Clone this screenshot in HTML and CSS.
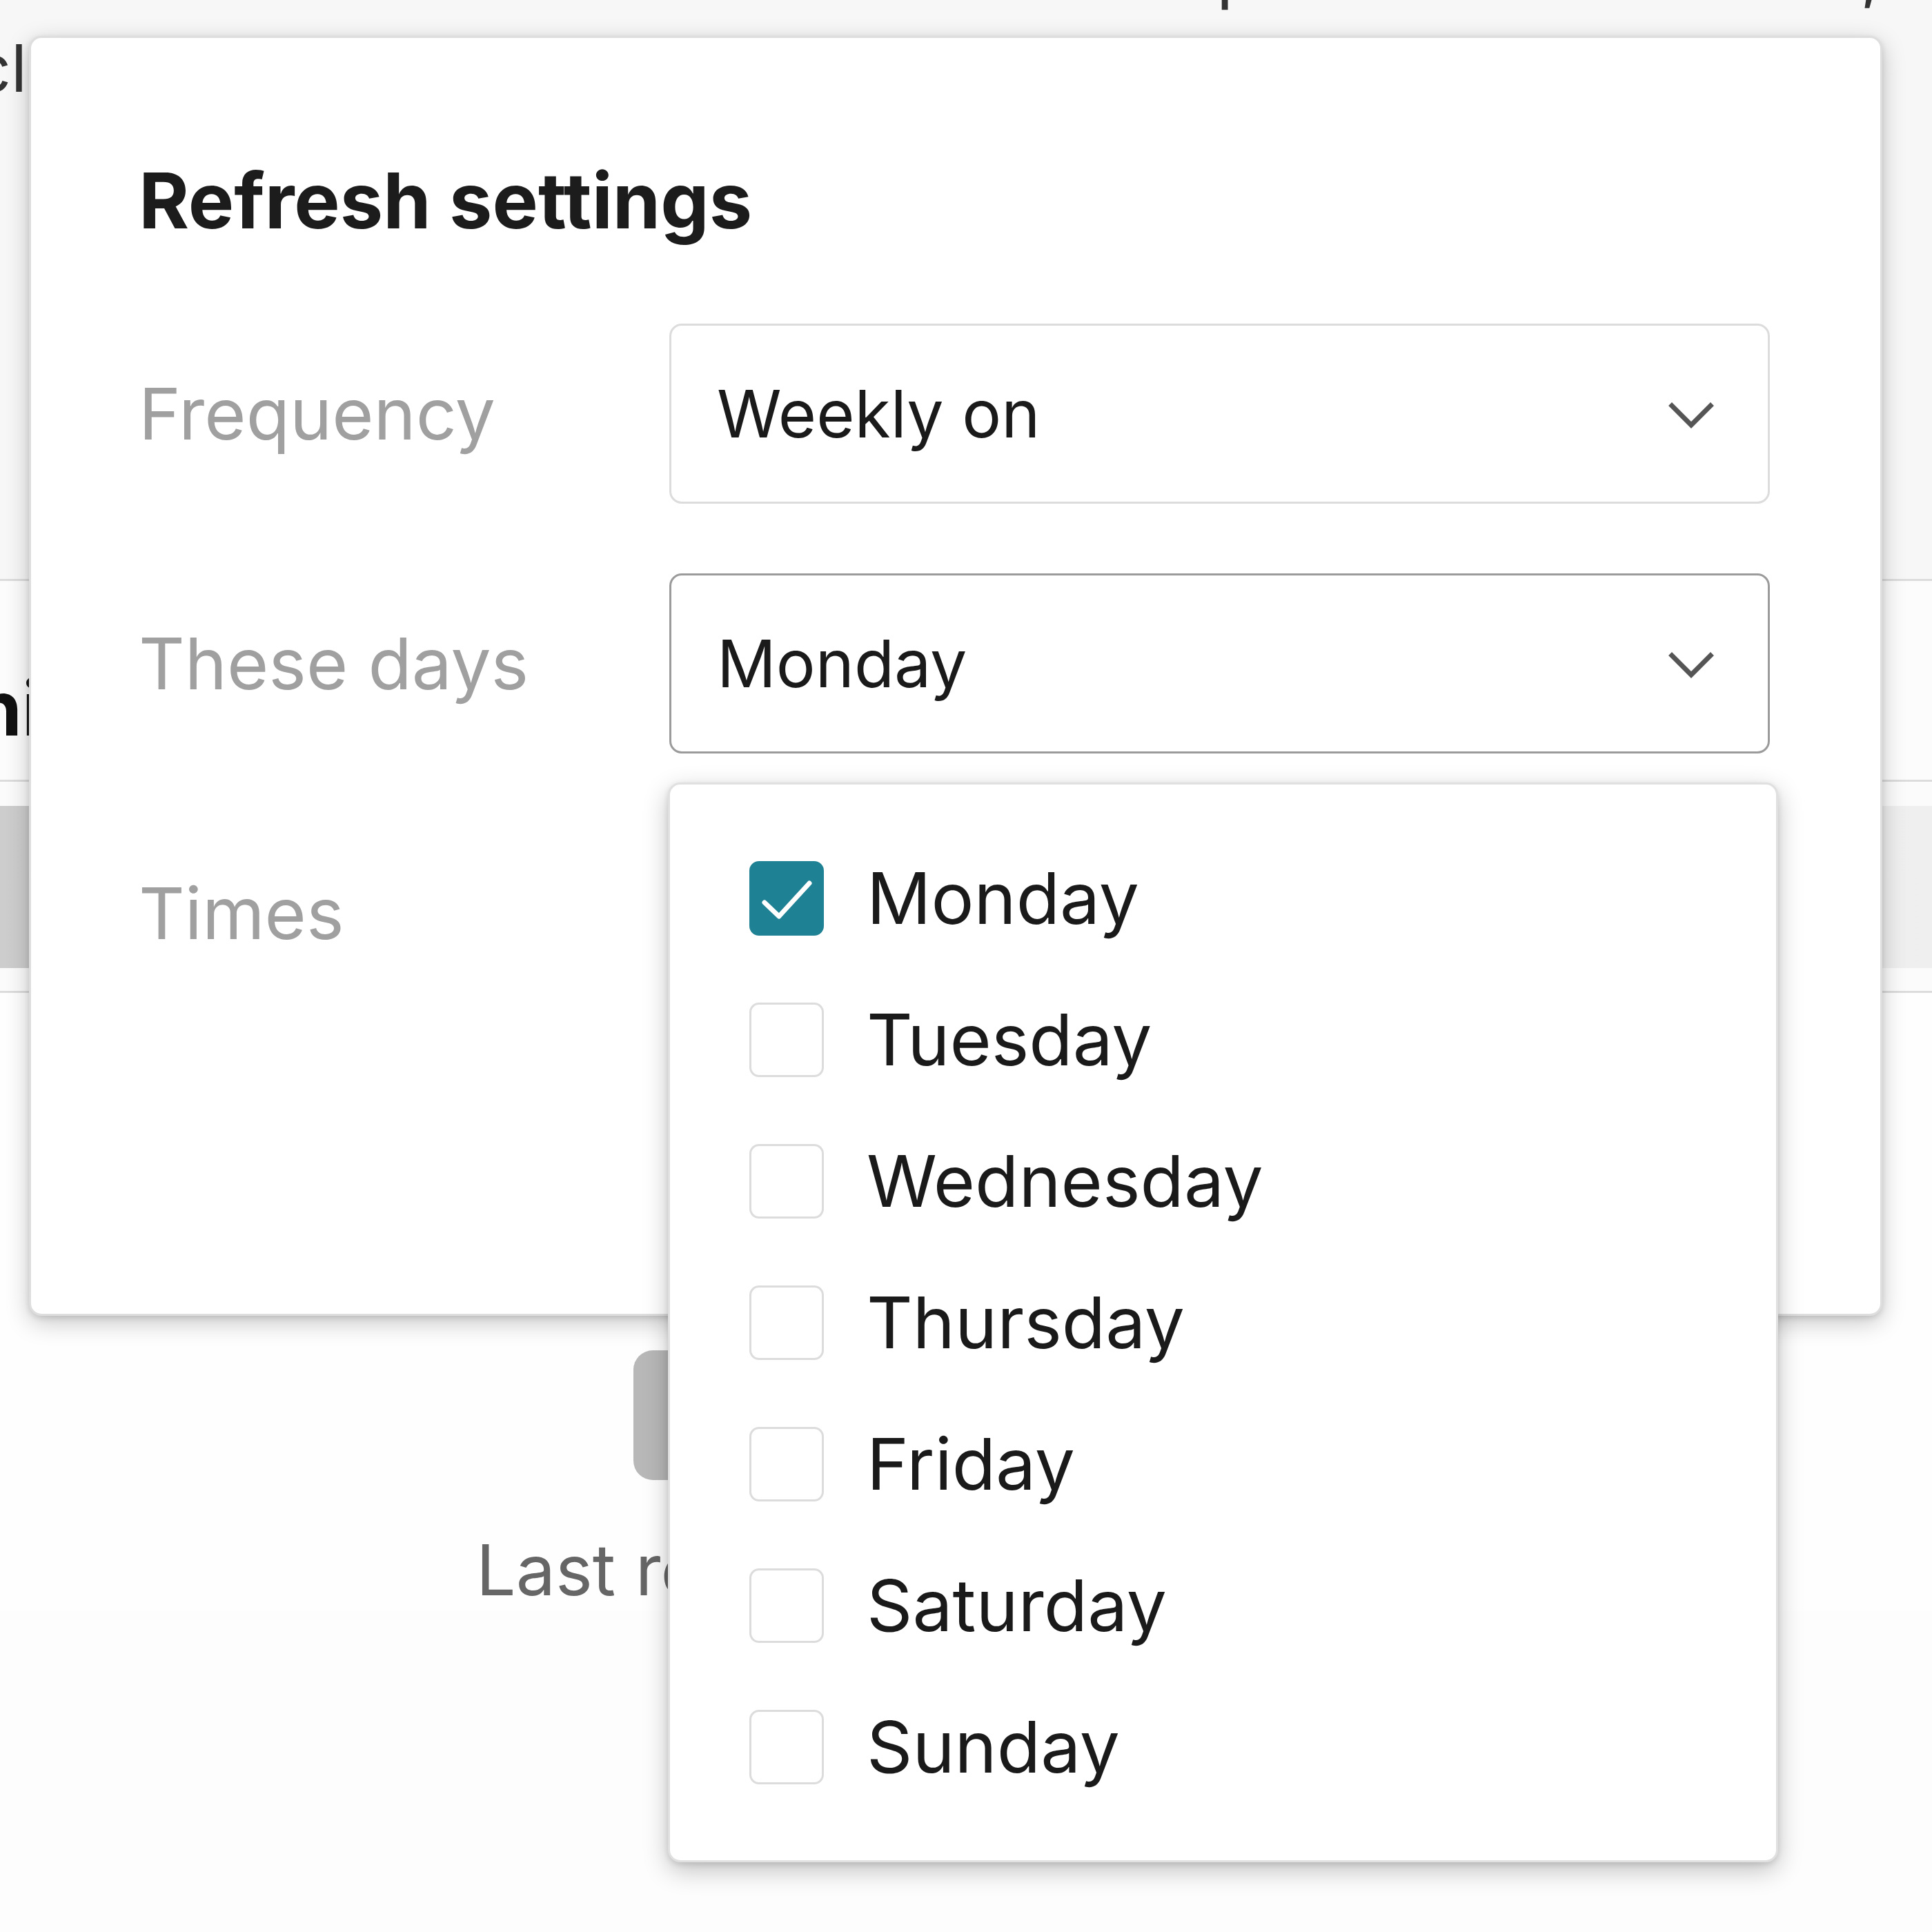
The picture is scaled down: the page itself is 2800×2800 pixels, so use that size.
FILE: index.html
```html
<!DOCTYPE html>
<html lang="en">
<head>
<meta charset="utf-8">
<title>Refresh settings</title>
<link rel="stylesheet" href="styles.css">
</head>
<body>
<div class="page">
  <div class="page-head">
    <div class="topline"><div class="topline-text"><span class="tl-p">p</span><span class="tl-c">,</span></div></div>
    <div class="head-title">Include</div>
  </div>
  <div class="rule"></div>
  <div class="row-name"><span class="row-name-text">Uni</span></div>
  <div class="rule"></div>
  <div class="row-sel"><div class="row-bar"></div></div>
  <div class="rule"></div>
  <div class="page-foot">
    <div class="refresh-btn"></div>
    <div class="last-refreshed">Last refreshed 2 hours ago</div>
  </div>
</div>

<div class="dialog">
  <h1 class="dialog-title">Refresh settings</h1>
  <div class="form">
    <div class="label">Frequency</div>
    <div class="select">
      <span class="select-value">Weekly on</span>
      <svg class="chev" viewBox="0 0 72 42"><path d="M8 7 L36 35 L64 7"/></svg>
    </div>
    <div class="label">These days</div>
    <div class="select is-open">
      <span class="select-value">Monday</span>
      <svg class="chev" viewBox="0 0 72 42"><path d="M8 7 L36 35 L64 7"/></svg>
    </div>
    <div class="label">Times</div>
    <div class="select">
      <span class="select-value">9:00 AM</span>
      <svg class="chev" viewBox="0 0 72 42"><path d="M8 7 L36 35 L64 7"/></svg>
    </div>
  </div>
</div>

<div class="menu">
  <div class="option">
    <span class="box checked"><svg viewBox="0 0 102 102"><path d="M19 57 L40 77 L84 29"/></svg></span>
    <span>Monday</span>
  </div>
  <div class="option"><span class="box"></span><span>Tuesday</span></div>
  <div class="option"><span class="box"></span><span>Wednesday</span></div>
  <div class="option"><span class="box"></span><span>Thursday</span></div>
  <div class="option"><span class="box"></span><span>Friday</span></div>
  <div class="option"><span class="box"></span><span>Saturday</span></div>
  <div class="option"><span class="box"></span><span>Sunday</span></div>
</div>
</body>
</html>
```

FILE: styles.css
```css
html, body {
  margin: 0;
  padding: 0;
}
body {
  width: 2800px;
  height: 2800px;
  position: relative;
  overflow: hidden;
  background: #fdfdfd;
  font-family: Inter, "Noto Sans", "Liberation Sans", sans-serif;
  color: #1a1a1a;
}

/* ---------- page underneath ---------- */
.page {
  display: flex;
  flex-direction: column;
}
.page-head {
  height: 839px;
  background: #f7f7f7;
  overflow: hidden;
}
.topline {
  height: 22px;
  overflow: hidden;
}
.topline-text {
  margin-top: -92px;
  font-size: 100px;
  line-height: 100px;
  white-space: nowrap;
  padding-left: 1763px;
  color: #333;
}
.tl-c {
  margin-left: 872px;
}
.head-title {
  margin-top: 20px;
  margin-left: -120px;
  font-size: 95px;
  line-height: 114px;
  color: #333;
  white-space: nowrap;
}
.rule {
  height: 3px;
  background: #dcdcdc;
}
.row-name {
  height: 288px;
  box-sizing: border-box;
  padding-top: 129px;
  background: #fcfcfc;
  overflow: hidden;
}
.row-name-text {
  display: block;
  margin-left: -117px;
  font-size: 110px;
  line-height: 110px;
  font-weight: 700;
  color: #111;
  white-space: nowrap;
}
.row-sel {
  padding: 35px 0 33px;
  background: #fbfbfb;
}
.row-bar {
  height: 235px;
  background: linear-gradient(to right, #cdcdcd 0%, #e4e4e4 50%, #efefef 100%);
}
.page-foot {
  display: flex;
  flex-direction: column;
  align-items: flex-start;
  background: #fefefe;
  flex: 1;
}
.refresh-btn {
  margin-top: 518px;
  margin-left: 918px;
  width: 964px;
  height: 188px;
  border-radius: 28px;
  background: #b8b8b8;
}
.last-refreshed {
  margin-top: 70px;
  margin-left: 690px;
  font-size: 102px;
  line-height: 120px;
  color: #666;
  white-space: nowrap;
}

/* ---------- dialog ---------- */
.dialog {
  position: absolute;
  left: 42px;
  top: 52px;
  width: 2686px;
  height: 1855px;
  box-sizing: border-box;
  padding: 170px 160px 0 156px;
  background: #fff;
  border: 3px solid #dedede;
  border-radius: 18px;
  box-shadow: 0 10px 34px rgba(0, 0, 0, 0.22), 0 3px 8px rgba(0, 0, 0, 0.12);
}
.dialog-title {
  margin: 0;
  font-size: 111.5px;
  line-height: 132px;
  font-weight: 700;
  color: #1c1c1c;
}
.form {
  margin-top: 112px;
  display: grid;
  grid-template-columns: 769px 1595px;
  row-gap: 101px;
  align-items: center;
}
.label {
  font-size: 103.5px;
  line-height: 120px;
  color: #a0a0a0;
}
.select {
  height: 261px;
  box-sizing: border-box;
  border: 3px solid #dcdcdc;
  border-radius: 18px;
  background: #fff;
  display: flex;
  align-items: center;
  justify-content: space-between;
  padding: 0 75px 0 66px;
  font-size: 95px;
  color: #1a1a1a;
}
.select.is-open {
  border-color: #9b9b9b;
}
.chev {
  width: 72px;
  height: 42px;
  margin-top: 4px;
  flex: none;
}
.chev path {
  fill: none;
  stroke: #555;
  stroke-width: 7;
  stroke-linecap: square;
  stroke-linejoin: miter;
}

/* ---------- dropdown menu ---------- */
.menu {
  position: absolute;
  left: 968px;
  top: 1134px;
  width: 1609px;
  box-sizing: border-box;
  padding: 62px 0;
  background: #fff;
  border: 3px solid #e0e0e0;
  border-radius: 18px;
  box-shadow: 0 12px 36px rgba(0, 0, 0, 0.24), 0 3px 8px rgba(0, 0, 0, 0.12);
}
.option {
  height: 205px;
  display: flex;
  align-items: center;
  gap: 62px;
  padding-left: 115px;
  font-size: 103.5px;
  color: #1a1a1a;
}
.box {
  width: 108px;
  height: 108px;
  box-sizing: border-box;
  flex: none;
  border: 3px solid #dcdcdc;
  border-radius: 14px;
  background: #fff;
}
.box.checked {
  background: #1f8294;
  border-color: #1f8294;
}
.box svg {
  display: block;
  width: 102px;
  height: 102px;
}
.box svg path {
  fill: none;
  stroke: #fff;
  stroke-width: 7;
  stroke-linecap: round;
  stroke-linejoin: round;
}
```
